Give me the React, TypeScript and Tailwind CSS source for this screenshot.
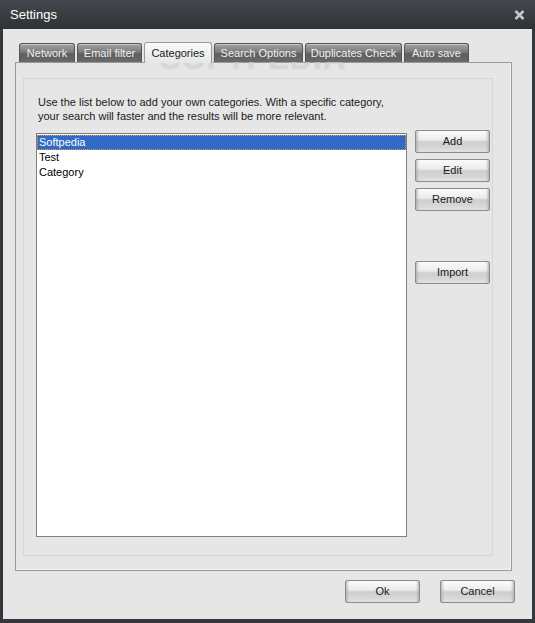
import React from "react";

const tabs = ["Network", "Email filter", "Categories", "Search Options", "Duplicates Check", "Auto save"];
const tabWidths = [56, 65, 68, 89, 97, 65];
const items = ["Softpedia", "Test", "Category"];

function Btn({ label, className = "" }: { label: string; className?: string }) {
  return (
    <button
      className={
        "h-[23px] w-[75px] rounded-[2px] border border-[#8c8c8c] text-[11px] text-[#1a1a1a] bg-[linear-gradient(to_bottom,#fbfbfb_0%,#ececec_42%,#cfcfcf_52%,#d6d6d6_80%,#e4e4e4_100%)] shadow-[inset_3px_0_3px_-2px_#a8a8a8,inset_-3px_0_3px_-2px_#a8a8a8,inset_0_1px_0_#ffffff] " +
        className
      }
    >
      {label}
    </button>
  );
}

export default function App() {
  return (
    <div
      className="w-[535px] h-[623px] flex flex-col bg-[#34373c] overflow-hidden relative"
      style={{ fontFamily: '"Liberation Sans", Arial, sans-serif' }}
    >
      {/* title bar */}
      <div className="h-[29px] flex items-center justify-between px-[10px] bg-[linear-gradient(to_bottom,#45484e,#2e3135)] shrink-0">
        <span className="text-[13px] text-white">Settings</span>
        <svg width="11" height="10" viewBox="0 0 11 10">
          <path d="M1.5 1 L9.5 9 M9.5 1 L1.5 9" stroke="#c3c8cd" strokeWidth="2.6" />
        </svg>
      </div>

      {/* client area */}
      <div className="flex-1 mx-[3px] mb-[4px] bg-[#e6e6e6] flex flex-col px-[12px] pt-[13px]">
        {/* tabs */}
        <div className="flex items-end gap-[2px] pl-[4px] h-[20px] relative z-10">
          {tabs.map((t, i) =>
            t === "Categories" ? (
              <div
                key={t}
                style={{ width: tabWidths[i] }}
                className="h-[21px] -mb-[1px] rounded-t-[3px] border border-b-0 border-[#9a9a9a] bg-[linear-gradient(to_bottom,#fafafa,#e6e6e6)] flex items-center justify-center text-[11px] text-[#1a1a1a]"
              >
                {t}
              </div>
            ) : (
              <div
                key={t}
                style={{ width: tabWidths[i] }}
                className="h-[19px] rounded-t-[3px] border border-b-0 border-[#555] bg-[linear-gradient(to_bottom,#a3a3a3,#7c7c7c_45%,#5e5e5e_55%,#6a6a6a)] flex items-center justify-center text-[11px] text-[#f0f0f0] shadow-[inset_0_1px_0_#c4c4c4]"
              >
                {t}
              </div>
            )
          )}
        </div>

        {/* tab panel */}
        <div className="w-[497px] h-[509px] border border-[#9a9a9a] shadow-[inset_-1px_-1px_0_#f4f4f4] bg-[#e6e6e6] pt-[15px] pl-[7px]">
          <div className="w-[470px] h-[478px] border border-[#d6d6d6] flex flex-col pl-[12px]">
            <p className="mt-[16px] ml-[2px] text-[11px] leading-[14px] text-[#1a1a1a]">
              Use the list below to add your own categories. With a specific category,
              <br />
              your search will faster and the results will be more relevant.
            </p>
            <div className="flex mt-[10px]">
              <div className="w-[371px] h-[404px] border border-[#7f7f7f] bg-white pt-px">
                {items.map((it, i) => (
                  <div
                    key={it}
                    className={
                      "h-[15px] pl-[2px] text-[11px] leading-[15px] " +
                      (i === 0
                        ? "bg-[#316ac5] text-white outline outline-1 outline-dotted outline-[#e0a040] -outline-offset-1"
                        : "text-black")
                    }
                  >
                    {it}
                  </div>
                ))}
              </div>
              <div className="flex flex-col ml-[8px] -mt-[3px] gap-[6px]">
                <Btn label="Add" />
                <Btn label="Edit" />
                <Btn label="Remove" />
                <Btn label="Import" className="mt-[44px]" />
              </div>
            </div>
          </div>
        </div>

        {/* bottom buttons */}
        <div className="flex justify-end gap-[20px] mt-[9px] pr-[5px]">
          <Btn label="Ok" />
          <Btn label="Cancel" />
        </div>
      </div>

      {/* watermark */}
      <div className="absolute left-[160px] top-[36px] text-[31px] font-bold tracking-[1px] text-white/45 pointer-events-none select-none [text-shadow:0_0_1px_rgba(110,110,110,0.4)]">
        SOFTPEDIA
      </div>
    </div>
  );
}
